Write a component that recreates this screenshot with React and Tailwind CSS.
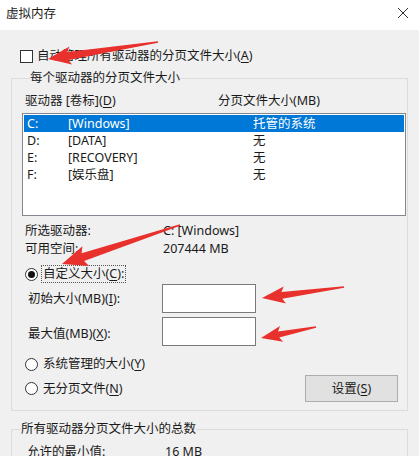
import React from "react";

// red annotation arrows drawn over the dialog
function arrowPoints(x1, y1, x2, y2, headLen = 17, headW = 17, tailW = 1.5, neckW = 6) {
  const dx = x2 - x1;
  const dy = y2 - y1;
  const L = Math.sqrt(dx * dx + dy * dy);
  const ux = dx / L;
  const uy = dy / L;
  const nx = -uy;
  const ny = ux;
  const bx = x2 - ux * headLen;
  const by = y2 - uy * headLen;
  const wx = bx - ux * 3;
  const wy = by - uy * 3;
  const pts = [
    [x1 + (nx * tailW) / 2, y1 + (ny * tailW) / 2],
    [bx + (nx * neckW) / 2, by + (ny * neckW) / 2],
    [wx + (nx * headW) / 2, wy + (ny * headW) / 2],
    [x2, y2],
    [wx - (nx * headW) / 2, wy - (ny * headW) / 2],
    [bx - (nx * neckW) / 2, by - (ny * neckW) / 2],
    [x1 - (nx * tailW) / 2, y1 - (ny * tailW) / 2],
  ];
  return pts.map((p) => p.map((v) => v.toFixed(1)).join(",")).join(" ");
}

const arrows = [
  { from: [158, 42], to: [48, 59], headLen: 20, headW: 18, neckW: 8 },
  { from: [180, 225], to: [62, 264], headLen: 22, headW: 21, neckW: 8 },
  { from: [344, 287], to: [262, 298], headLen: 20, headW: 17, neckW: 7 },
  { from: [316, 327], to: [261, 338], headLen: 18, headW: 16, neckW: 6 },
];

const drives = [
  { letter: "C:", label: "[Windows]", size: "托管的系统", selected: true },
  { letter: "D:", label: "[DATA]", size: "无" },
  { letter: "E:", label: "[RECOVERY]", size: "无" },
  { letter: "F:", label: "[娱乐盘]", size: "无" },
];

function Radio({ checked }) {
  return (
    <span className="flex h-[13px] w-[13px] shrink-0 items-center justify-center rounded-full border border-[#333] bg-white">
      {checked && <span className="h-[7px] w-[7px] rounded-full bg-[#111]" />}
    </span>
  );
}

function Key({ children }) {
  return <u className="underline-offset-2">{children}</u>;
}

export default function App() {
  return (
    <div className="relative h-[456px] w-[419px] overflow-hidden bg-[#f0f0f0] font-['Noto_Sans','Noto_Sans_CJK_SC',sans-serif] text-[12.5px] leading-[16px] text-[#1a1a1a]">
      {/* title bar */}
      <div className="flex h-[30px] items-center justify-between bg-white pl-[6px] pr-[10px]">
        <span className="-mt-[2px]">虚拟内存</span>
        <svg width="12" height="12" viewBox="0 0 12 12" className="-mt-[4px]">
          <path d="M1 1 L11 11 M11 1 L1 11" stroke="#333" strokeWidth="1" />
        </svg>
      </div>

      {/* auto manage */}
      <div className="mt-[18px] flex items-center pl-[20px]">
        <span className="h-[13px] w-[13px] border border-[#333] bg-white" />
        <span className="ml-[4px]">
          自动管理所有驱动器的分页文件大小(<Key>A</Key>)
        </span>
      </div>

      {/* per-drive group */}
      <fieldset className="mx-[11px] mt-[6px] border border-[#dcdcdc] pb-[8px] pl-[10px] pr-[1px]">
        <legend className="ml-[8px] px-0 leading-[16px]">每个驱动器的分页文件大小</legend>
        <div className="mt-[7px] flex pl-[3px]">
          <span className="w-[193px]">
            驱动器 [卷标](<Key>D</Key>)
          </span>
          <span>分页文件大小(MB)</span>
        </div>
        <div className="mt-[4px] h-[103px] border border-[#828790] bg-white p-[1px]">
          {drives.map((d) => (
            <div
              key={d.letter}
              className={`flex h-[17px] items-center pl-[3px] ${d.selected ? "bg-[#0078d7] text-white" : ""}`}
            >
              <span className="w-[41px]">{d.letter}</span>
              <span className="w-[185px]">{d.label}</span>
              <span>{d.size}</span>
            </div>
          ))}
        </div>

        <div className="mt-[6px] pl-[3px] leading-[18px]">
          <div className="flex">
            <span className="w-[138px]">所选驱动器:</span>
            <span>C: [Windows]</span>
          </div>
          <div className="flex">
            <span className="w-[138px]">可用空间:</span>
            <span>207444 MB</span>
          </div>
        </div>

        <div className="mt-[7px] flex h-[18px] items-center pl-[3px]">
          <Radio checked />
          <span className="ml-[3px] border border-dotted border-[#555] px-[1px] leading-[16px]">
            自定义大小(<Key>C</Key>):
          </span>
        </div>

        <div className="mt-[1px] flex items-center pl-[6px]">
          <span className="w-[134px]">
            初始大小(MB)(<Key>I</Key>):
          </span>
          <div className="h-[29px] w-[94px] border border-[#7a7a7a] bg-white" />
        </div>
        <div className="mt-[4px] flex items-center pl-[6px]">
          <span className="mt-[4px] w-[134px]">
            最大值(MB)(<Key>X</Key>):
          </span>
          <div className="h-[29px] w-[94px] border border-[#7a7a7a] bg-white" />
        </div>

        <div className="mt-[10px] flex h-[16px] items-center pl-[3px]">
          <Radio />
          <span className="ml-[5px]">
            系统管理的大小(<Key>Y</Key>)
          </span>
        </div>
        <div className="mt-[3px] flex h-[27px] items-center justify-between pl-[3px] pr-[8px]">
          <div className="flex items-center">
            <Radio />
            <span className="ml-[5px]">
              无分页文件(<Key>N</Key>)
            </span>
          </div>
          <button className="h-[27px] w-[93px] border border-[#adadad] bg-[#e1e1e1] text-[12.5px]">
            设置(<Key>S</Key>)
          </button>
        </div>
      </fieldset>

      {/* totals group */}
      <fieldset className="mx-[11px] mt-[10px] h-[60px] border border-[#dcdcdc] pl-[15px]">
        <legend className="-ml-[6px] px-0 leading-[16px]">所有驱动器分页文件大小的总数</legend>
        <div className="mt-[7px] flex">
          <span className="w-[138px]">允许的最小值:</span>
          <span>16 MB</span>
        </div>
      </fieldset>

      {/* annotation arrows */}
      <svg className="pointer-events-none absolute left-0 top-0" width="419" height="456">
        {arrows.map((a, i) => (
          <polygon
            key={i}
            points={arrowPoints(a.from[0], a.from[1], a.to[0], a.to[1], a.headLen, a.headW, 1.5, a.neckW)}
            fill="#e8302c"
          />
        ))}
      </svg>
    </div>
  );
}
